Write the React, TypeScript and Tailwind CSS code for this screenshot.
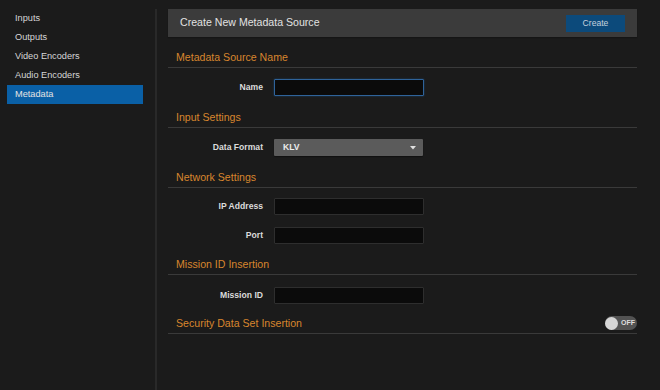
import React from "react";

const navItems = ["Inputs", "Outputs", "Video Encoders", "Audio Encoders", "Metadata"];

function Heading({ title, h, children }: { title: string; h: string; children?: React.ReactNode }) {
  return (
    <div className={`flex items-end justify-between border-b border-[#3a3a3a] pb-[3px] pl-[8px] ${h}`}>
      <span className="text-[10.6px] leading-[14px] text-[#d8862e]">{title}</span>
      {children}
    </div>
  );
}

function Row({ label, mt, children }: { label: string; mt: string; children: React.ReactNode }) {
  return (
    <div className={`flex items-center ${mt}`}>
      <div className="w-[95px] text-right text-[8.6px] font-bold text-[#dcdcdc]">{label}</div>
      <div className="ml-[11px]">{children}</div>
    </div>
  );
}

function TextInput({ focus }: { focus?: boolean }) {
  return (
    <div
      className={`h-[17px] w-[150px] rounded-[1px] border bg-[#0b0b0b] ${
        focus ? "border-[#2f639a] shadow-[0_0_2px_#1d4870]" : "border-[#2e2e2e]"
      }`}
    />
  );
}

export default function App() {
  return (
    <div
      className="flex h-[390px] w-[660px] bg-[#1b1b1b] text-[#dcdcdc]"
      style={{ fontFamily: '"Liberation Sans", Arial, sans-serif' }}
    >
      <div className="w-[155px] pl-[7px] pr-[12px] pt-[9px]">
        {navItems.map((n) => (
          <div
            key={n}
            className={`flex h-[19px] items-center pl-[8px] text-[9.2px] ${
              n === "Metadata" ? "bg-[#0a60a6] text-[#e4e4e4]" : "text-[#d6d6d6]"
            }`}
          >
            {n}
          </div>
        ))}
      </div>
      <div className="mt-[9px] w-[2px] bg-[#292929]" />
      <div className="flex-1 pl-[11px] pr-[23px] pt-[9px]">
        <div className="flex h-[28px] items-center justify-between bg-[#3b3b3b] pl-[12px] pr-[12px] shadow-[0_1px_1px_#151515]">
          <span className="text-[10.6px] text-[#e2e2e2]">Create New Metadata Source</span>
          <div className="flex h-[17px] w-[59px] items-center justify-center bg-[#0c4a7b] text-[8.6px] text-[#c4d2de]">
            Create
          </div>
        </div>

        <Heading title="Metadata Source Name" h="h-[31px]" />
        <Row label="Name" mt="mt-[11px]">
          <TextInput focus />
        </Row>

        <Heading title="Input Settings" h="h-[32px]" />
        <Row label="Data Format" mt="mt-[11px]">
          <div className="flex h-[17px] w-[149px] items-center justify-between rounded-[1px] bg-[#5b5b5b] pl-[9px] pr-[7px] shadow-[0_1px_1px_#111]">
            <span className="text-[8.6px] font-bold text-[#ececec]">KLV</span>
            <svg width="6" height="4" viewBox="0 0 6 4">
              <path d="M0 0 L6 0 L3 3.5 Z" fill="#e0e0e0" />
            </svg>
          </div>
        </Row>

        <Heading title="Network Settings" h="h-[32px]" />
        <Row label="IP Address" mt="mt-[10px]">
          <TextInput />
        </Row>
        <Row label="Port" mt="mt-[12px]">
          <TextInput />
        </Row>

        <Heading title="Mission ID Insertion" h="h-[31px]" />
        <Row label="Mission ID" mt="mt-[12px]">
          <TextInput />
        </Row>

        <Heading title="Security Data Set Insertion" h="h-[30px]">
          <div className="flex h-[14px] w-[32px] items-center rounded-full bg-[#535353]">
            <div className="h-[13px] w-[13px] rounded-full bg-[#d6d6d6]" />
            <span className="ml-[3px] text-[7px] font-bold text-[#dedede]">OFF</span>
          </div>
        </Heading>
      </div>
    </div>
  );
}
